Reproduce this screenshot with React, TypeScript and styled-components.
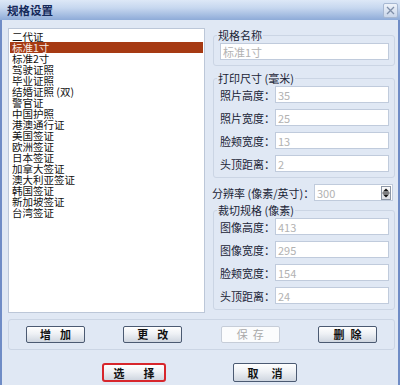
import React from "react";
import styled, {createGlobalStyle} from "styled-components";

const GlobalStyle = createGlobalStyle`
    html, body {
        margin: 0;
        padding: 0;
    }
    body {
        font-family: "Noto Sans CJK SC", "Liberation Sans", sans-serif;
        font-size: 11px;
        color: #111111;
    }
`

const Window = styled.div`
    display: flex;
    flex-direction: column;
    width: 400px;
    height: 385px;
    overflow: hidden;
    background-color: #e0e8f4;
`

const TitleBar = styled.div`
    display: flex;
    height: 20px;
    align-items: center;
    justify-content: space-between;
    padding: 0 2px 0 7px;
    background: linear-gradient(to bottom, #dde8f7 0%, #c6d7ef 40%, #8eabd8 100%);
`

const TitleText = styled.div`
    font-size: 11.5px;
    font-weight: bold;
    color: #15295a;
    line-height: 20px;
`

const CloseButton = styled.div`
    display: flex;
    width: 15px;
    height: 15px;
    box-sizing: border-box;
    align-items: center;
    justify-content: center;
    border: 1px solid #a7b8d2;
    border-radius: 2px;
    background: linear-gradient(#eef3fa, #c9d6ea);
`

const Body = styled.div`
    display: flex;
    flex: 1;
    flex-direction: column;
    padding: 0 3px 0 6px;
    border-left: 2px solid #6f8cc6;
    border-right: 2px solid #6f8cc6;
`

const MainRow = styled.div`
    display: flex;
    gap: 7px;
    margin-top: 8px;
`

const ListBox = styled.div`
    width: 197px;
    height: 285px;
    box-sizing: border-box;
    padding: 2px 1px;
    border: 1px solid #bcc7d8;
    background-color: #ffffff;
`

const ListItem = styled.div<{$selected?: boolean}>`
    height: 11px;
    padding-left: 2px;
    font-size: 10.5px;
    line-height: 11px;
    white-space: nowrap;
    color: ${props => props.$selected ? "#f8ece4" : "#111111"};
    background-color: ${props => props.$selected ? "#a63a13" : "transparent"};
`

const SettingsColumn = styled.div`
    display: flex;
    flex: 1;
    flex-direction: column;
    gap: 6px;
    padding-top: 1px;
`

const GroupBox = styled.fieldset<{$gap: number}>`
    display: flex;
    flex-direction: column;
    gap: ${props => props.$gap}px;
    margin: 0 0 0 1px;
    padding: 1px 5px 5px 6px;
    border: 1px solid #cbd5e4;
    border-radius: 3px;
`

const GroupTitle = styled.legend`
    margin-left: -3px;
    padding: 0 1px;
    line-height: 13px;
    white-space: pre;
    color: #1a2436;
`

const FieldRow = styled.div`
    display: flex;
    align-items: center;
    height: 17px;
`

const FieldLabel = styled.div<{$width: number}>`
    width: ${props => props.$width}px;
    flex-shrink: 0;
    white-space: pre;
    color: #1a2436;
`

const TextBox = styled.div`
    display: flex;
    flex: 1;
    height: 17px;
    box-sizing: border-box;
    align-items: center;
    padding-left: 2px;
    border: 1px solid #c0cbdc;
    background-color: #ffffff;
    color: #b2b2b2;
`

const SpinBox = styled(TextBox)`
    justify-content: space-between;
    padding-right: 1px;
`

const SpinArrows = styled.div`
    display: flex;
    width: 10px;
    height: 14px;
    box-sizing: border-box;
    border: 1px solid #8d97a6;
    background: linear-gradient(#fafafa, #dcdfe4);
`

const ResolutionRow = styled(FieldRow)`
    margin: 0 2px -3px 0;
`

const ButtonGroup = styled.div`
    display: flex;
    height: 31px;
    box-sizing: border-box;
    align-items: center;
    justify-content: space-between;
    margin-top: 6px;
    padding: 0 17px 1px 17px;
    border: 1px solid #cbd5e4;
    border-radius: 3px;
`

type PushButtonProps = {
    $spacing: number,
    $disabled?: boolean,
    $focused?: boolean,
    $large?: boolean
}
const PushButton = styled.div<PushButtonProps>`
    display: flex;
    width: ${props => props.$large ? "64px" : "59px"};
    height: ${props => props.$large ? "19px" : "17px"};
    box-sizing: border-box;
    align-items: center;
    justify-content: center;
    gap: ${props => props.$spacing}px;
    white-space: nowrap;
    font-weight: ${props => props.$disabled ? "normal" : "bold"};
    color: ${props => props.$disabled ? "#a9a9a9" : "#111111"};
    background: ${props => props.$disabled
        ? "#fbfcfd"
        : "linear-gradient(#ffffff 0%, #eef1f5 45%, #cfd6e0 100%)"};
    border: ${props => props.$focused
        ? "2px solid #d7262c"
        : props.$disabled ? "1px solid #c6cdd8" : "1px solid #4b5a72"};
    border-radius: ${props => props.$focused ? "3px" : "2px"};
`

const DialogButtons = styled.div`
    display: flex;
    justify-content: center;
    gap: 67px;
    margin: 13px 4px 0 0;
`

const listItems = [
    "二代证", "标准1寸", "标准2寸", "驾驶证照", "毕业证照", "结婚证照 (双)",
    "警官证", "中国护照", "港澳通行证", "美国签证", "欧洲签证", "日本签证",
    "加拿大签证", "澳大利亚签证", "韩国签证", "新加坡签证", "台湾签证"
];

const printFields = [
    {label: "照片高度：", value: "35"},
    {label: "照片宽度：", value: "25"},
    {label: "脸颊宽度：", value: "13"},
    {label: "头顶距离：", value: "2"}
];

const cropFields = [
    {label: "图像高度：", value: "413"},
    {label: "图像宽度：", value: "295"},
    {label: "脸颊宽度：", value: "154"},
    {label: "头顶距离：", value: "24"}
];

function FieldGroup(props: {title: string, fields: {label: string, value: string}[]}) {
    return <GroupBox $gap={6}>
        <GroupTitle>{props.title}</GroupTitle>
        { props.fields.map(field => <FieldRow key={field.label}>
            <FieldLabel $width={55}>{field.label}</FieldLabel>
            <TextBox>{field.value}</TextBox>
        </FieldRow>) }
    </GroupBox>
}

function Button(props: {text: string} & PushButtonProps) {
    const {text, ...rest} = props;
    return <PushButton {...rest}>
        { text.split("").map((char, index) => <span key={index}>{char}</span>) }
    </PushButton>
}

export default function App(): React.ReactElement {
    return <Window>
        <GlobalStyle/>
        <TitleBar>
            <TitleText>规格设置</TitleText>
            <CloseButton>
                <svg width="9" height="9" viewBox="0 0 9 9">
                    <path d="M1 1 L8 8 M8 1 L1 8" stroke="#7f8fa9" strokeWidth="1.3"/>
                </svg>
            </CloseButton>
        </TitleBar>
        <Body>
            <MainRow>
                <ListBox>
                    { listItems.map((item, index) => <ListItem key={item} $selected={index === 1}>{item}</ListItem>) }
                </ListBox>
                <SettingsColumn>
                    <GroupBox $gap={0}>
                        <GroupTitle>规格名称</GroupTitle>
                        <FieldRow>
                            <TextBox>标准1寸</TextBox>
                        </FieldRow>
                    </GroupBox>
                    <FieldGroup title="打印尺寸 (毫米)" fields={printFields}/>
                    <ResolutionRow>
                        <FieldLabel $width={102}>分辨率 (像素/英寸)：</FieldLabel>
                        <SpinBox>
                            300
                            <SpinArrows>
                                <svg width="8" height="12" viewBox="0 0 8 12">
                                    <path d="M4 1.5 L7 4.5 L1 4.5 Z" fill="#111"/>
                                    <path d="M0.5 6 H7.5" stroke="#111" strokeWidth="1"/>
                                    <path d="M1 7.5 L7 7.5 L4 10.5 Z" fill="#111"/>
                                </svg>
                            </SpinArrows>
                        </SpinBox>
                    </ResolutionRow>
                    <FieldGroup title="裁切规格 (像素)" fields={cropFields}/>
                </SettingsColumn>
            </MainRow>
            <ButtonGroup>
                <Button text="增加" $spacing={9}/>
                <Button text="更改" $spacing={9}/>
                <Button text="保存" $spacing={5} $disabled/>
                <Button text="删除" $spacing={6}/>
            </ButtonGroup>
            <DialogButtons>
                <Button text="选择" $spacing={19} $large $focused/>
                <Button text="取消" $spacing={13} $large/>
            </DialogButtons>
        </Body>
    </Window>
}
